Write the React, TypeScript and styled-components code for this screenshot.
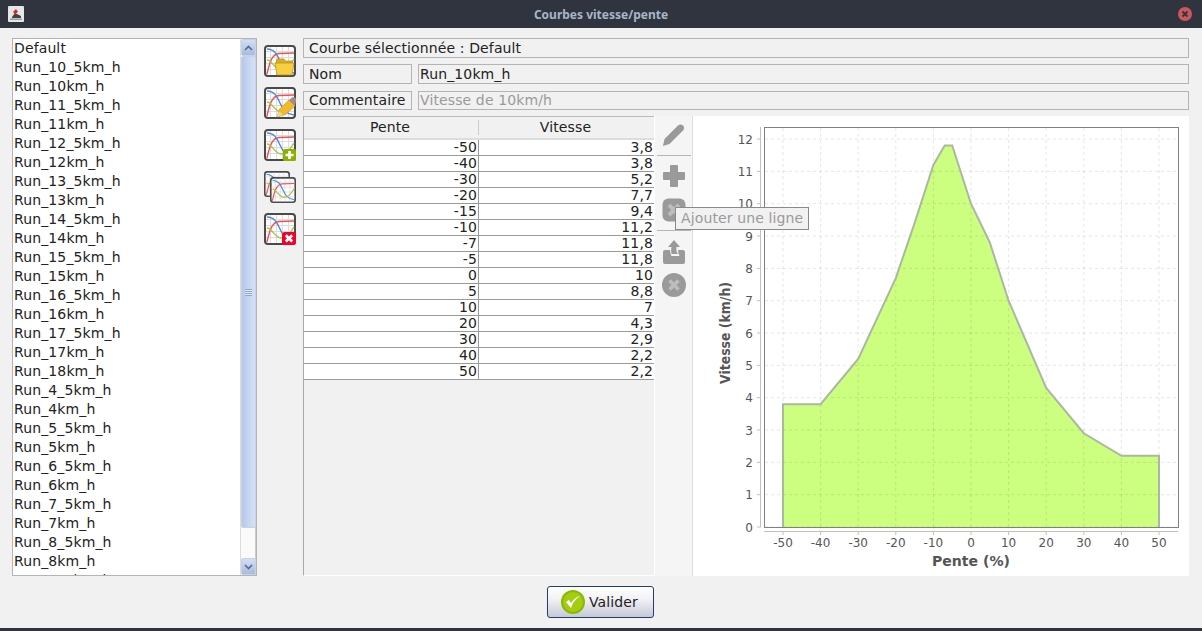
import React from "react";
import styled, { createGlobalStyle } from "styled-components";

const Global = createGlobalStyle`
  html, body { margin: 0; padding: 0; background: #f1f1f1; }
  body { font-family: "DejaVu Sans", sans-serif; font-size: 14px; letter-spacing: .12px; color: #222; }
`;
const Win = styled.div`
  position: relative; width: 1202px; height: 631px; display: flex; flex-direction: column;
  overflow: hidden; background: #f1f1f1; border-bottom: 3px solid #2f343f; box-sizing: border-box;
`;
const TitleBar = styled.div`
  height: 28px; flex: none; background: #2f343f; display: flex; align-items: center; justify-content: center;
  position: relative; color: #a9b6c9; font: bold 12px "Noto Sans", sans-serif; letter-spacing: 0;
`;
const AppIcon = styled.svg` position: absolute; left: 8px; top: 6px; `;
const Close = styled.svg` position: absolute; right: 10px; top: 7px; `;
const Body = styled.div`
  flex: 1; min-height: 0; display: grid; grid-template-columns: 245px 46px 886px; padding: 10px 0 0 12px;
  height: 538px;
`;
const ListBox = styled.div`
  height: 538px; box-sizing: border-box; border: 1px solid #b4b4b4; background: #fff; display: flex; overflow: hidden;
`;
const Items = styled.div` flex: 1; overflow: hidden; padding-left: 1px; `;
const Item = styled.div` height: 19px; line-height: 18px; white-space: nowrap; color: #222; `;
const Scroll = styled.div`
  width: 16px; flex: none; display: flex; flex-direction: column; border-left: 1px solid #ddd;
  border-right: 1px solid #ccc; box-sizing: border-box; background: #fafafa; align-items: center;
`;
const ScrollBtn = styled.div`
  width: 15px; height: 17px; flex: none; box-sizing: border-box; border: 1px solid #c4d2ea; border-radius: 2px;
  background: linear-gradient(#d3dff2, #a9bbdc); display: flex; align-items: center; justify-content: center;
`;
const Thumb = styled.div`
  width: 15px; height: 472px; flex: none; box-sizing: border-box; border: 1px solid #c4d2ea; border-radius: 2px;
  background: linear-gradient(90deg, #b6c8ea, #d6e1f6); display: flex; align-items: center; justify-content: center;
`;
const Grip = styled.div`
  width: 7px; height: 7px;
  background: repeating-linear-gradient(#8fa5cc 0 1px, #e4ebf8 1px 2px);
`;
const Track = styled.div` flex: 1; `;
const Tools = styled.div`
  display: flex; flex-direction: column; gap: 10px; padding: 7px 0 0 7px;
`;
const Right = styled.div` display: flex; flex-direction: column; height: 538px; `;
const Field = styled.div<{ $w?: number; $h?: number; $muted?: boolean }>`
  box-sizing: border-box; height: ${(p) => p.$h ?? 20}px; line-height: ${(p) => (p.$h ? p.$h - 2 : 19)}px;
  ${(p) => (p.$w ? `width: ${p.$w}px; flex: none;` : "flex: 1;")}
  border: 1px solid #b4b4b4; background: #f1f1f1; padding-left: 5px; white-space: nowrap;
  color: ${(p) => (p.$muted ? "#9a9a9a" : "#222")};
`;
const FieldValue = styled(Field)` padding-left: 1px; `;
const Row = styled.div<{ $top: number }>`
  display: flex; gap: 6px; margin-top: ${(p) => p.$top}px;
`;
const Lower = styled.div` flex: 1; min-height: 0; display: flex; margin-top: 6px; `;
const TablePane = styled.div`
  width: 351px; flex: none; box-sizing: border-box; border-left: 1px solid #aaa; border-top: 1px solid #bbb;
  display: flex; flex-direction: column; border-bottom: 1px solid #fff;
`;
const HeadRow = styled.div`
  display: grid; grid-template-columns: 174px 1fr; height: 21px; flex: none; align-items: center;
  border-bottom: 2px solid #ddd; text-align: center; box-sizing: content-box; background: #f1f1f1;
`;
const HeadCell = styled.div<{ $sep?: boolean }>`
  line-height: 15px; padding-right: 2px; ${(p) => p.$sep && "border-left: 1px solid #ccc;"}
`;
const DataRow = styled.div`
  display: grid; grid-template-columns: 174px 1fr; height: 16px; box-sizing: border-box;
  border-bottom: 1px solid #9a9a9a; background: #fff;
`;
const Cell = styled.div<{ $sep?: boolean }>`
  text-align: right; line-height: 15px; padding-right: 1px; font-size: 14px;
  ${(p) => p.$sep && "border-left: 1px solid #9a9a9a;"}
`;
const Side = styled.div`
  width: 37px; flex: none; background: #f5f5f5; display: flex; flex-direction: column; align-items: center;
  border-right: 1px solid #ddd; border-left: 1px solid #fff; padding-top: 7px;
`;
const SideIcon = styled.svg<{ $gap?: number }>` flex: none; margin-top: ${(p) => p.$gap ?? 0}px; `;
const Sep = styled.div<{ $top: number }>`
  width: 34px; height: 1px; flex: none; background: #b5b5b5; margin-top: ${(p) => p.$top}px;
`;
const ChartPane = styled.div` width: 496px; flex: none; background: #fff; height: 460px; `;
const Chart = styled.svg` display: block; letter-spacing: 0; `;
const Tip = styled.div`
  position: absolute; left: 675px; top: 207px; width: 134px; height: 23px; box-sizing: border-box;
  border: 1px solid #8a8a8a; background: #f1f1f1; color: #9a9a9a; line-height: 20px; padding-left: 5px; white-space: nowrap;
`;
const Footer = styled.div` height: 52px; flex: none; display: flex; justify-content: center; align-items: flex-start; padding: 10px 1px 0 0; box-sizing: border-box; `;
const Button = styled.button`
  width: 107px; height: 32px; box-sizing: border-box; border: 1px solid #1d3f72; border-radius: 3px;
  background: linear-gradient(#ffffff, #f2f2f6 40%, #c6c8d6); display: flex; align-items: center; gap: 4px;
  padding: 0 0 0 13px; font: 14px "DejaVu Sans", sans-serif; letter-spacing: .12px; color: #222;
`;

const names = ["Default","Run_10_5km_h","Run_10km_h","Run_11_5km_h","Run_11km_h","Run_12_5km_h","Run_12km_h","Run_13_5km_h","Run_13km_h","Run_14_5km_h","Run_14km_h","Run_15_5km_h","Run_15km_h","Run_16_5km_h","Run_16km_h","Run_17_5km_h","Run_17km_h","Run_18km_h","Run_4_5km_h","Run_4km_h","Run_5_5km_h","Run_5km_h","Run_6_5km_h","Run_6km_h","Run_7_5km_h","Run_7km_h","Run_8_5km_h","Run_8km_h","Run_9_5km_h"];
const data: [number, number][] = [[-50,3.8],[-40,3.8],[-30,5.2],[-20,7.7],[-15,9.4],[-10,11.2],[-7,11.8],[-5,11.8],[0,10],[5,8.8],[10,7],[20,4.3],[30,2.9],[40,2.2],[50,2.2]];
const fr = (n: number) => String(n).replace(".", ",");
const X = (v: number) => 971 + v * 3.76;
const Y = (v: number) => 527 - v * 32.33;
const ticksX = [-50,-40,-30,-20,-10,0,10,20,30,40,50];
const ticksY = [0,1,2,3,4,5,6,7,8,9,10,11,12];
const line = data.map(([a, b]) => `${X(a)},${Y(b)}`).join(" ");

function CurveBase() {
  return (
    <g>
      <rect x="1" y="1" width="30" height="30" rx="3" fill="#fff" stroke="#4a4a4a" strokeWidth="2" />
      <path d="M6.500 2v28M12.500 2v28M18.500 2v28M24.500 2v28M2 6.500h28M2 12.500h28M2 18.500h28M2 24.500h28" stroke="#dcdcdc" strokeWidth="1" />
      <path d="M3 29C6 15 9 9 15 8.500L30 8" fill="none" stroke="#f25050" strokeWidth="1.400" />
      <path d="M3 4C10 4 13 9 16 16S22 27 30 28" fill="none" stroke="#4a88e6" strokeWidth="1.400" />
      <path d="M3 15C8 15 11 25 17 25S26 20 30 14" fill="none" stroke="#a6c24a" strokeWidth="1.400" />
    </g>
  );
}
type Kind = "open" | "edit" | "add" | "copy" | "del";
function GraphIcon({ kind }: { kind: Kind }) {
  return (
    <svg width="32" height="32" viewBox="0 0 32 32">
      {kind === "copy" ? (
        <>
          <g transform="scale(.8125)"><CurveBase /></g>
          <g transform="translate(6 6) scale(.8125)"><CurveBase /></g>
        </>
      ) : <CurveBase />}
      {kind === "open" && (
        <g>
          <path d="M12 18l1-4h7l1.500 2H28l1 3H12z" fill="#dfae1c" stroke="#a98410" strokeWidth=".6" />
          <path d="M11 18h19l-2 12H13z" fill="#f7d041" stroke="#b08c14" strokeWidth=".7" />
        </g>
      )}
      {kind === "edit" && (
        <g>
          <path d="M13 30l2.500-8L25 13l6 6-9.500 8.500z" fill="#f4b92a" stroke="#c58f14" strokeWidth=".6" />
          <path d="M25 13l3-2.500c1-.7 2-.7 3 0s1.500 2 1 3.500L31 19z" fill="#a58a8a" />
          <path d="M13 30l2-6 4 4z" fill="#ead7a0" />
        </g>
      )}
      {kind === "add" && (
        <g>
          <rect x="19" y="20" width="13" height="12" rx="1.500" fill="#8cb000" />
          <path d="M25.500 22v8M21.500 26h8" stroke="#fff" strokeWidth="2.600" />
        </g>
      )}
      {kind === "del" && (
        <g>
          <rect x="18" y="19" width="14" height="13" rx="2.500" fill="#f5002a" />
          <path d="M21.800 22.200l6.400 6.400M28.200 22.200l-6.400 6.400" stroke="#fff" strokeWidth="2.800" />
        </g>
      )}
    </svg>
  );
}

export default function App() {
  return (
    <Win>
      <Global />
      <TitleBar>
        <AppIcon width="16" height="16" viewBox="0 0 16 16">
          <rect width="16" height="16" rx="1" fill="#e6e6e6" />
          <path d="M4 11l3-4 6 3v2H4z" fill="#444" />
          <path d="M5 6l3-3 2 3-3 2z" fill="#d22" />
          <path d="M2 12.500h12V14H2z" fill="#99a" />
        </AppIcon>
        Courbes vitesse/pente
        <Close width="14" height="14" viewBox="0 0 14 14">
          <circle cx="7" cy="7" r="7" fill="#cc575d" />
          <path d="M4.500 4.500l5 5M9.500 4.500l-5 5" stroke="#2f343f" strokeWidth="1.800" />
        </Close>
      </TitleBar>
      <Body>
        <ListBox>
          <Items>{names.map((n) => <Item key={n}>{n}</Item>)}</Items>
          <Scroll>
            <ScrollBtn>
              <svg width="9" height="6" viewBox="0 0 9 6"><path d="M1 5l3.500-3.500L8 5" fill="none" stroke="#4f6a96" strokeWidth="1.600" /></svg>
            </ScrollBtn>
            <Thumb><Grip /></Thumb>
            <Track />
            <ScrollBtn>
              <svg width="9" height="6" viewBox="0 0 9 6"><path d="M1 1l3.500 3.500L8 1" fill="none" stroke="#4f6a96" strokeWidth="1.600" /></svg>
            </ScrollBtn>
          </Scroll>
        </ListBox>
        <Tools>
          <GraphIcon kind="open" />
          <GraphIcon kind="edit" />
          <GraphIcon kind="add" />
          <GraphIcon kind="copy" />
          <GraphIcon kind="del" />
        </Tools>
        <Right>
          <Row $top={0}><Field>Courbe sélectionnée : Default</Field></Row>
          <Row $top={6}>
            <Field $w={109}>Nom</Field>
            <FieldValue>Run_10km_h</FieldValue>
          </Row>
          <Row $top={7}>
            <Field $w={109} $h={19}>Commentaire</Field>
            <FieldValue $h={19} $muted>Vitesse de 10km/h</FieldValue>
          </Row>
          <Lower>
            <TablePane>
              <HeadRow>
                <HeadCell>Pente</HeadCell>
                <HeadCell $sep>Vitesse</HeadCell>
              </HeadRow>
              {data.map(([a, b]) => (
                <DataRow key={a}>
                  <Cell>{fr(a)}</Cell>
                  <Cell $sep>{fr(b)}</Cell>
                </DataRow>
              ))}
            </TablePane>
            <Side>
              <SideIcon width="24" height="24" viewBox="0 0 24 24" fill="#9a9a9a">
                <path d="M1 23l1.500-7L16 2.500c1.500-1.500 3.500-1.500 5 0s1.500 3.500 0 5L7.500 21z" />
              </SideIcon>
              <Sep $top={8} />
              <SideIcon width="24" height="24" viewBox="0 0 24 24" $gap={8} fill="#9a9a9a">
                <path d="M9 1h6a1 1 0 0 1 1 1v6h6a1 1 0 0 1 1 1v6a1 1 0 0 1-1 1h-6v6a1 1 0 0 1-1 1H9a1 1 0 0 1-1-1v-6H2a1 1 0 0 1-1-1V9a1 1 0 0 1 1-1h6V2a1 1 0 0 1 1-1z" />
              </SideIcon>
              <SideIcon width="24" height="24" viewBox="0 0 24 24" $gap={10}>
                <rect x="0.500" y="0.500" width="23" height="23" rx="6" fill="#9a9a9a" />
                <path d="M7 7l10 10M17 7L7 17" stroke="#bdbdbd" strokeWidth="4" />
              </SideIcon>
              <Sep $top={8} />
              <SideIcon width="24" height="24" viewBox="0 0 24 24" $gap={9} fill="#9a9a9a">
                <path d="M12 0l6 7h-3.500c-.5 3 0 5 1.500 7H9.500C9 11 9 9 9.500 7H6z" />
                <path d="M3 10h5c0 2 .5 4 1.500 6h8c-1-2-1.500-4-1.500-6h5a2 2 0 0 1 2 2v10a2 2 0 0 1-2 2H3a2 2 0 0 1-2-2V12a2 2 0 0 1 2-2z" />
              </SideIcon>
              <SideIcon width="24" height="24" viewBox="0 0 24 24" $gap={9}>
                <circle cx="12" cy="12" r="12" fill="#9a9a9a" />
                <path d="M7.500 7.500l9 9M16.500 7.500l-9 9" stroke="#bdbdbd" strokeWidth="3.600" />
              </SideIcon>
            </Side>
            <ChartPane>
              <Chart width="496" height="460" viewBox="693 116 496 460">
                <rect x="764.500" y="127.500" width="414" height="400" fill="#fff" />
                <polygon points={`${X(-50)},527 ${line} ${X(50)},527`} fill="#ccff80" />
                {ticksX.map((t) => (
                  <line key={t} x1={X(t)} x2={X(t)} y1="128" y2="527" stroke="rgba(0,0,0,.1)" strokeDasharray="3 3" />
                ))}
                {ticksY.map((t) => (
                  <line key={t} x1="765" x2="1178" y1={Y(t)} y2={Y(t)} stroke="rgba(0,0,0,.1)" strokeDasharray="3 3" />
                ))}
                <polyline points={`${X(-50)},527 ${line} ${X(50)},527`} fill="none" stroke="#abb8a0" strokeWidth="2" />
                <rect x="764.500" y="127.500" width="414" height="400" fill="none" stroke="#808080" />
                <path d="M760.500 127V527" stroke="#c0c0c0" />
                <path d="M764 531.500H1178" stroke="#c0c0c0" />
                {ticksY.map((t) => (
                  <g key={t}>
                    <line x1="757" x2="761" y1={Y(t)} y2={Y(t)} stroke="#c0c0c0" />
                    <text x="753" y={Y(t) + 4.500} textAnchor="end" fontFamily="DejaVu Sans" fontSize="12" fill="#555">{t}</text>
                  </g>
                ))}
                {ticksX.map((t) => (
                  <g key={t}>
                    <line x1={X(t)} x2={X(t)} y1="531" y2="535" stroke="#c0c0c0" />
                    <text x={X(t)} y="547" textAnchor="middle" fontFamily="DejaVu Sans" fontSize="12" fill="#555">{t}</text>
                  </g>
                ))}
                <text x="971" y="566" textAnchor="middle" fontFamily="DejaVu Sans" fontWeight="bold" fontSize="14" textLength={78} lengthAdjust="spacingAndGlyphs" fill="#555">Pente (%)</text>
                <text transform="translate(730 333) rotate(-90)" textAnchor="middle" fontFamily="DejaVu Sans" fontWeight="bold" fontSize="14" textLength={102} lengthAdjust="spacingAndGlyphs" fill="#555">Vitesse (km/h)</text>
              </Chart>
            </ChartPane>
          </Lower>
        </Right>
      </Body>
      <Footer>
        <Button>
          <svg width="24" height="24" viewBox="0 0 24 24">
            <circle cx="12" cy="12" r="12" fill="#8cb800" />
            <circle cx="12" cy="12" r="10" fill="#a4cc10" />
            <path d="M5 12l5 6c2-6 5-9 9-12-4 1-7 4-9 7l-2-3z" fill="#fff" />
          </svg>
          Valider
        </Button>
      </Footer>
      <Tip>Ajouter une ligne</Tip>
    </Win>
  );
}
